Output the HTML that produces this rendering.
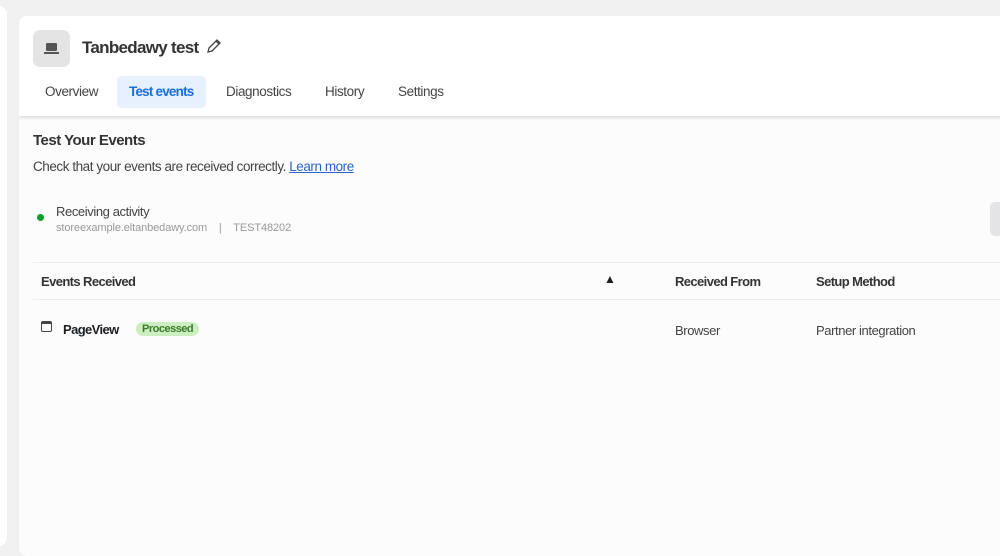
<!DOCTYPE html>
<html><head><style>
body{margin:0;width:1000px;height:538px;background:#f0f0f0;font-family:"Liberation Sans",sans-serif;position:relative;overflow:hidden;color:#1c1e21;letter-spacing:-0.3px}
.left{position:absolute;left:-10px;top:6px;width:17px;height:540px;background:#fff;border-radius:8px}
.card{position:absolute;left:19px;top:16px;width:1000px;height:540px;background:#fcfcfc;border-radius:8px;overflow:hidden}
.head{position:absolute;left:0;top:0;width:100%;height:100px;background:#fff;box-shadow:0 2px 3px rgba(0,0,0,.12)}
.ic{position:absolute;left:14px;top:14px;width:37px;height:37px;background:#e4e4e4;border-radius:7px}
.title{position:absolute;left:63px;top:22px;font-size:17px;font-weight:bold;color:#333;letter-spacing:-0.7px}
.tab{position:absolute;top:60px;height:32px;line-height:32px;font-size:13.5px;color:#444;letter-spacing:-0.4px}
.sel{background:#e7f0fd;color:#1a6ed8;font-weight:bold;border-radius:5px;padding:0 13px 0 12px;letter-spacing:-0.8px}
.t{position:absolute;white-space:nowrap}
.line{position:absolute;left:14px;width:990px;height:1px;background:#ececec}
</style></head><body>
<div class="left"></div>
<div class="card">
<div class="head">
<div class="ic"><svg width="37" height="37"><rect x="13" y="13" width="11" height="8" fill="#555" rx="1"/><rect x="11" y="22" width="15" height="2" fill="#555"/></svg></div>
<div class="title">Tanbedawy test <svg width="16" height="16" style="vertical-align:-1px;margin-left:3px" viewBox="0 0 16 16"><path d="M2 14l1-4 8-8 3 3-8 8z M10 3l3 3" fill="none" stroke="#444" stroke-width="1.3"/></svg></div>
<div class="tab" style="left:26px">Overview</div>
<div class="tab sel" style="left:98px">Test events</div>
<div class="tab" style="left:207px">Diagnostics</div>
<div class="tab" style="left:306px">History</div>
<div class="tab" style="left:379px">Settings</div>
</div>
<div class="t" style="left:14px;top:116px;font-size:15px;font-weight:bold;color:#333;letter-spacing:-0.5px">Test Your Events</div>
<div class="t" style="left:14px;top:143px;font-size:13.5px;color:#444;letter-spacing:-0.45px">Check that your events are received correctly. <span style="color:#2a64c5;text-decoration:underline">Learn more</span></div>
<div class="t" style="left:18px;top:198px;width:7px;height:7px;border-radius:50%;background:#0a9d2a"></div>
<div class="t" style="left:37px;top:188px;font-size:13px;color:#444;letter-spacing:-0.4px">Receiving activity</div>
<div class="t" style="left:37px;top:206px;font-size:11px;color:#999;letter-spacing:-0.1px">storeexample.eltanbedawy.com &nbsp;&nbsp;&nbsp;|&nbsp;&nbsp;&nbsp; TEST48202</div>
<div class="t" style="left:971px;top:186px;width:20px;height:34px;background:#e4e4e6;border-radius:5px"></div>
<div class="line" style="top:246px"></div>
<div class="t" style="left:22px;top:258px;font-size:13px;font-weight:bold;color:#333;letter-spacing:-0.6px">Events Received</div>
<div class="t" style="left:585px;top:256px;font-size:12px">▲</div>
<div class="t" style="left:656px;top:258px;font-size:13px;font-weight:bold;color:#333;letter-spacing:-0.6px">Received From</div>
<div class="t" style="left:797px;top:258px;font-size:13px;font-weight:bold;color:#333;letter-spacing:-0.6px">Setup Method</div>
<div class="line" style="top:283px"></div>
<div class="t" style="left:22px;top:305px;width:11px;height:11px;border:1.3px solid #444;border-radius:2px;box-sizing:border-box;border-top-width:3px"></div>
<div class="t" style="left:44px;top:306px;font-size:13px;font-weight:bold;letter-spacing:-0.6px">PageView</div>
<div class="t" style="left:117px;top:306px;font-size:11px;font-weight:bold;color:#3b7a2b;background:#cdeec0;border-radius:8px;padding:1px 6px;letter-spacing:-0.5px">Processed</div>
<div class="t" style="left:656px;top:307px;font-size:13px;color:#444;letter-spacing:-0.4px">Browser</div>
<div class="t" style="left:797px;top:307px;font-size:13px;color:#444;letter-spacing:-0.4px">Partner integration</div>
</div>
</body></html>
